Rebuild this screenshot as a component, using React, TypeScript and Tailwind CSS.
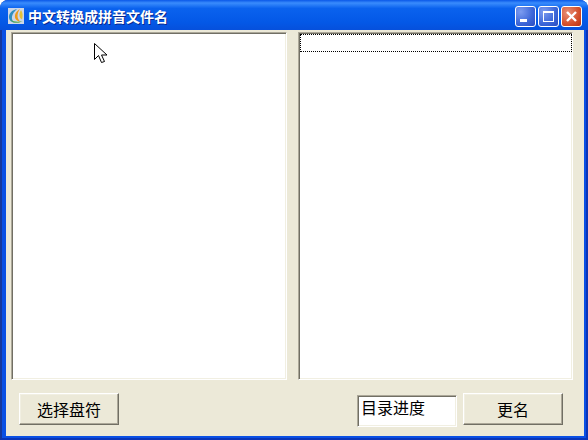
import React from 'react';

const cjk = 'font-["Noto_Sans_CJK_SC",sans-serif]';
const sunken =
  'bg-white border border-t-[#aca899] border-l-[#aca899] border-r-white border-b-white shadow-[inset_1px_1px_0_#716f64,inset_-1px_-1px_0_#f1efe2]';

function AppIcon() {
  return (
    <svg width="16" height="16" viewBox="0 0 16 16" className="shrink-0">
      <rect width="16" height="16" fill="#cdd6e6" />
      <path d="M9 1C4 2 .5 5.500 1 10c.4 2.500 2.500 4.500 6 5-2.500-1.500-3.500-3.500-3-6.500C4.500 6 6.500 3 9 1z" fill="#2f8fc0" />
      <path d="M12 1C8.500 3 6.500 6 7 9.500c.4 2.300 2.500 4 5.500 4-2-1.300-3-3.300-3-5.500 0-2.500 1-5 2.500-7z" fill="#ee9a18" />
      <path d="M13 2c-1.200 2-1.800 4-1.500 6 .2 1.500 1 2.500 2.500 3.500C15 8 15 5 13 2z" fill="#e2c23a" />
      <path d="M2 11.500C5 15.500 10 15.800 14.500 13c-4 1.200-8.500 1-12.500-1.500z" fill="#4ea84a" />
    </svg>
  );
}

function CaptionButton({ kind }: { kind: 'min' | 'max' | 'close' }) {
  const bg =
    kind === 'close'
      ? 'bg-[radial-gradient(circle_at_30%_30%,#e89078,#d4502c_60%,#b83010)]'
      : 'bg-[radial-gradient(circle_at_25%_25%,#7c9cf0,#3c66d8_60%,#2a4cc0)]';
  return (
    <div className={`w-[21px] h-[21px] rounded-[3px] border border-white ${bg} relative shrink-0`}>
      <svg width="19" height="19" viewBox="0 0 19 19" className="absolute inset-0">
        {kind === 'min' && <rect x="4" y="12" width="7" height="3" fill="#fff" />}
        {kind === 'max' && (
          <g fill="none" stroke="#fff">
            <rect x="4.500" y="5.500" width="10" height="9" />
            <path d="M4 4.500h11M4 5.500h11" />
          </g>
        )}
        {kind === 'close' && <path d="M5 5l9 9M14 5l-9 9" stroke="#fff" strokeWidth="2.400" fill="none" />}
      </svg>
    </div>
  );
}

function Cursor() {
  return (
    <svg width="14" height="22" viewBox="0 0 14 22" className="absolute left-[94px] top-[43px]">
      <path d="M0.500 0.500v16l4-4 3 7 3-1-3-6.500h5.500z" fill="#fff" stroke="#000" strokeWidth="1" />
    </svg>
  );
}

function Button({ label, className }: { label: string; className: string }) {
  return (
    <button
      className={`w-[100px] h-[32px] bg-[#ece9d8] border border-t-white border-l-white border-r-[#716f64] border-b-[#716f64] shadow-[inset_-1px_-1px_0_#aca899,inset_1px_1px_0_#f1efe2] text-[16px] leading-[16px] text-black ${cjk} ${className}`}
    >
      {label}
    </button>
  );
}

export default function App() {
  return (
    <div className="w-[588px] h-[440px] bg-white overflow-hidden">
      <div className="h-full rounded-t-[8px] border-x-2 border-b-2 border-l-[#16389c] border-r-[#0a35b8] border-b-[#0a35b8] flex flex-col bg-[#0a50e4]">
        <div className="h-[30px] -ml-[2px] -mr-[2px] pl-[8px] pr-[6px] pt-[2px] flex items-center rounded-t-[8px] bg-[linear-gradient(180deg,#0a58e8_0%,#3a8cfc_10%,#0a62ee_28%,#0458e6_75%,#0650dc_100%)]">
          <AppIcon />
          <span className={`ml-[4px] text-[14px] font-bold text-white leading-none [text-shadow:1px_1px_0_#0a2a90] ${cjk}`}>
            中文转换成拼音文件名
          </span>
          <div className="ml-auto flex gap-[2px]">
            <CaptionButton kind="min" />
            <CaptionButton kind="max" />
            <CaptionButton kind="close" />
          </div>
        </div>
        <div className="flex-1 ml-[4px] mr-[2px] mb-[2px] bg-[#ece9d8] flex flex-col pt-[2px] pl-[5px] pr-[11px]">
          <div className="flex justify-between h-[348px]">
            <div className={`w-[276px] ${sunken}`} />
            <div className={`w-[275px] pl-px pt-px ${sunken}`}>
              <div className="h-[18px] border border-dotted border-black" />
            </div>
          </div>
          <div className="flex items-start mt-[13px] pl-[8px]">
            <Button label="选择盘符" className="" />
            <div className={`ml-auto mt-[2px] w-[100px] h-[32px] ${sunken} text-[16px] leading-[18px] pl-[3px] pt-[2px] text-black ${cjk}`}>
              目录进度
            </div>
            <Button label="更名" className="ml-[6px] mr-[10px]" />
          </div>
        </div>
      </div>
      <Cursor />
    </div>
  );
}
